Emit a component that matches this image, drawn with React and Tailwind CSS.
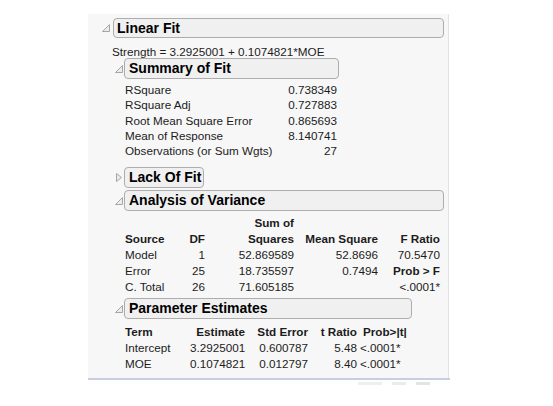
import React from 'react';

function DownTri() {
  return (
    <svg width="8" height="8" viewBox="0 0 8 8" className="shrink-0">
      <path d="M0.5 7.5 L7.5 0.5 L7.5 7.5 Z" fill="#ececec" stroke="#a6a6a6" strokeWidth="1" />
    </svg>
  );
}

function RightTri() {
  return (
    <svg width="8" height="9" viewBox="0 0 8 9" className="shrink-0">
      <path d="M1.5 0.5 L6.5 4.5 L1.5 8.5 Z" fill="#ececec" stroke="#a6a6a6" strokeWidth="1" />
    </svg>
  );
}

function Header({ title, width, open = true, className = '' }) {
  return (
    <div className={`flex items-center gap-[1px] pl-[27px] ${className}`}>
      {open ? <DownTri /> : <RightTri />}
      <div
        className="h-[21px] flex items-center pl-[4px] rounded-[4px] border border-[#adadad] bg-[#f0f0f0] text-[14px] font-bold text-black"
        style={{ width }}
      >
        {title}
      </div>
    </div>
  );
}

const summary = [
  ['RSquare', '0.738349'],
  ['RSquare Adj', '0.727883'],
  ['Root Mean Square Error', '0.865693'],
  ['Mean of Response', '8.140741'],
  ['Observations (or Sum Wgts)', '27'],
];

const anova = [
  ['Model', '1', '52.869589', '52.8696', '70.5470'],
  ['Error', '25', '18.735597', '0.7494', 'Prob > F'],
  ['C. Total', '26', '71.605185', '', '<.0001*'],
];

const params = [
  ['Intercept', '3.2925001', '0.600787', '5.48', '<.0001*'],
  ['MOE', '0.1074821', '0.012797', '8.40', '<.0001*'],
];

export default function App() {
  return (
    <div className="w-[553px] h-[406px] bg-white pt-[14px] pl-[88px] font-['Liberation_Sans',Arial,sans-serif] text-[11.7px] text-[#1c1c1c]">
      <div className="w-[361px] h-[364px] bg-[#f7f7f7] border-r border-[#e3e3e3] flex flex-col">
        {/* Linear Fit */}
        <div className="flex items-center gap-[3px] pl-[14px] mt-[4px]">
          <DownTri />
          <div className="w-[331px] h-[20px] flex items-center pl-[3px] rounded-[4px] border border-[#adadad] bg-[#f0f0f0] text-[14px] font-bold text-black">
            Linear Fit
          </div>
        </div>

        <div className="pl-[24px] mt-[7px] h-[13px] leading-[14px]">
          Strength = 3.2925001 + 0.1074821*MOE
        </div>

        <Header title="Summary of Fit" width="215px" />

        <div className="pl-[37px] mt-[3px] grid grid-cols-[162px_50px] leading-[15.3px]">
          {summary.map(([k, v]) => (
            <React.Fragment key={k}>
              <div>{k}</div>
              <div className="text-right">{v}</div>
            </React.Fragment>
          ))}
        </div>

        <Header title="Lack Of Fit" width="80px" open={false} className="mt-[9px]" />
        <Header title="Analysis of Variance" width="320px" className="mt-[2px]" />

        <div className="pl-[37px] mt-[4px] grid grid-cols-[55px_25px_89px_84px_62px] leading-[16px]">
          <div />
          <div />
          <div className="text-right font-bold">Sum of</div>
          <div />
          <div />
          <div className="font-bold">Source</div>
          <div className="text-right font-bold">DF</div>
          <div className="text-right font-bold">Squares</div>
          <div className="text-right font-bold">Mean Square</div>
          <div className="text-right font-bold">F Ratio</div>
          {anova.map((r) => (
            <React.Fragment key={r[0]}>
              <div>{r[0]}</div>
              <div className="text-right">{r[1]}</div>
              <div className="text-right">{r[2]}</div>
              <div className="text-right">{r[3]}</div>
              <div className={`text-right ${r[4] === 'Prob > F' ? 'font-bold' : ''}`}>{r[4]}</div>
            </React.Fragment>
          ))}
        </div>

        <Header title="Parameter Estimates" width="288px" className="mt-[3px]" />

        <div className="pl-[37px] mt-[5px] grid grid-cols-[65px_55px_63px_49px_60px] leading-[15.7px]">
          <div className="font-bold">Term</div>
          <div className="text-right font-bold">Estimate</div>
          <div className="text-right font-bold">Std Error</div>
          <div className="text-right font-bold">t Ratio</div>
          <div className="pl-[6px] font-bold">Prob&gt;|t|</div>
          {params.map((r) => (
            <React.Fragment key={r[0]}>
              <div>{r[0]}</div>
              <div className="text-right">{r[1]}</div>
              <div className="text-right">{r[2]}</div>
              <div className="text-right">{r[3]}</div>
              <div className="pl-[3px]">{r[4]}</div>
            </React.Fragment>
          ))}
        </div>
      </div>
      <div className="w-[362px] h-[2px] bg-[#c8cde0]" />
      <div className="flex ml-[270px] mt-[2px] w-[92px] h-[3px] gap-[10px]">
        <div className="w-[24px] h-[3px] bg-[#efefef]" />
        <div className="w-[14px] h-[3px] bg-[#ebebeb]" />
        <div className="w-[14px] h-[3px] bg-[#e4e4e4]" />
      </div>
    </div>
  );
}
